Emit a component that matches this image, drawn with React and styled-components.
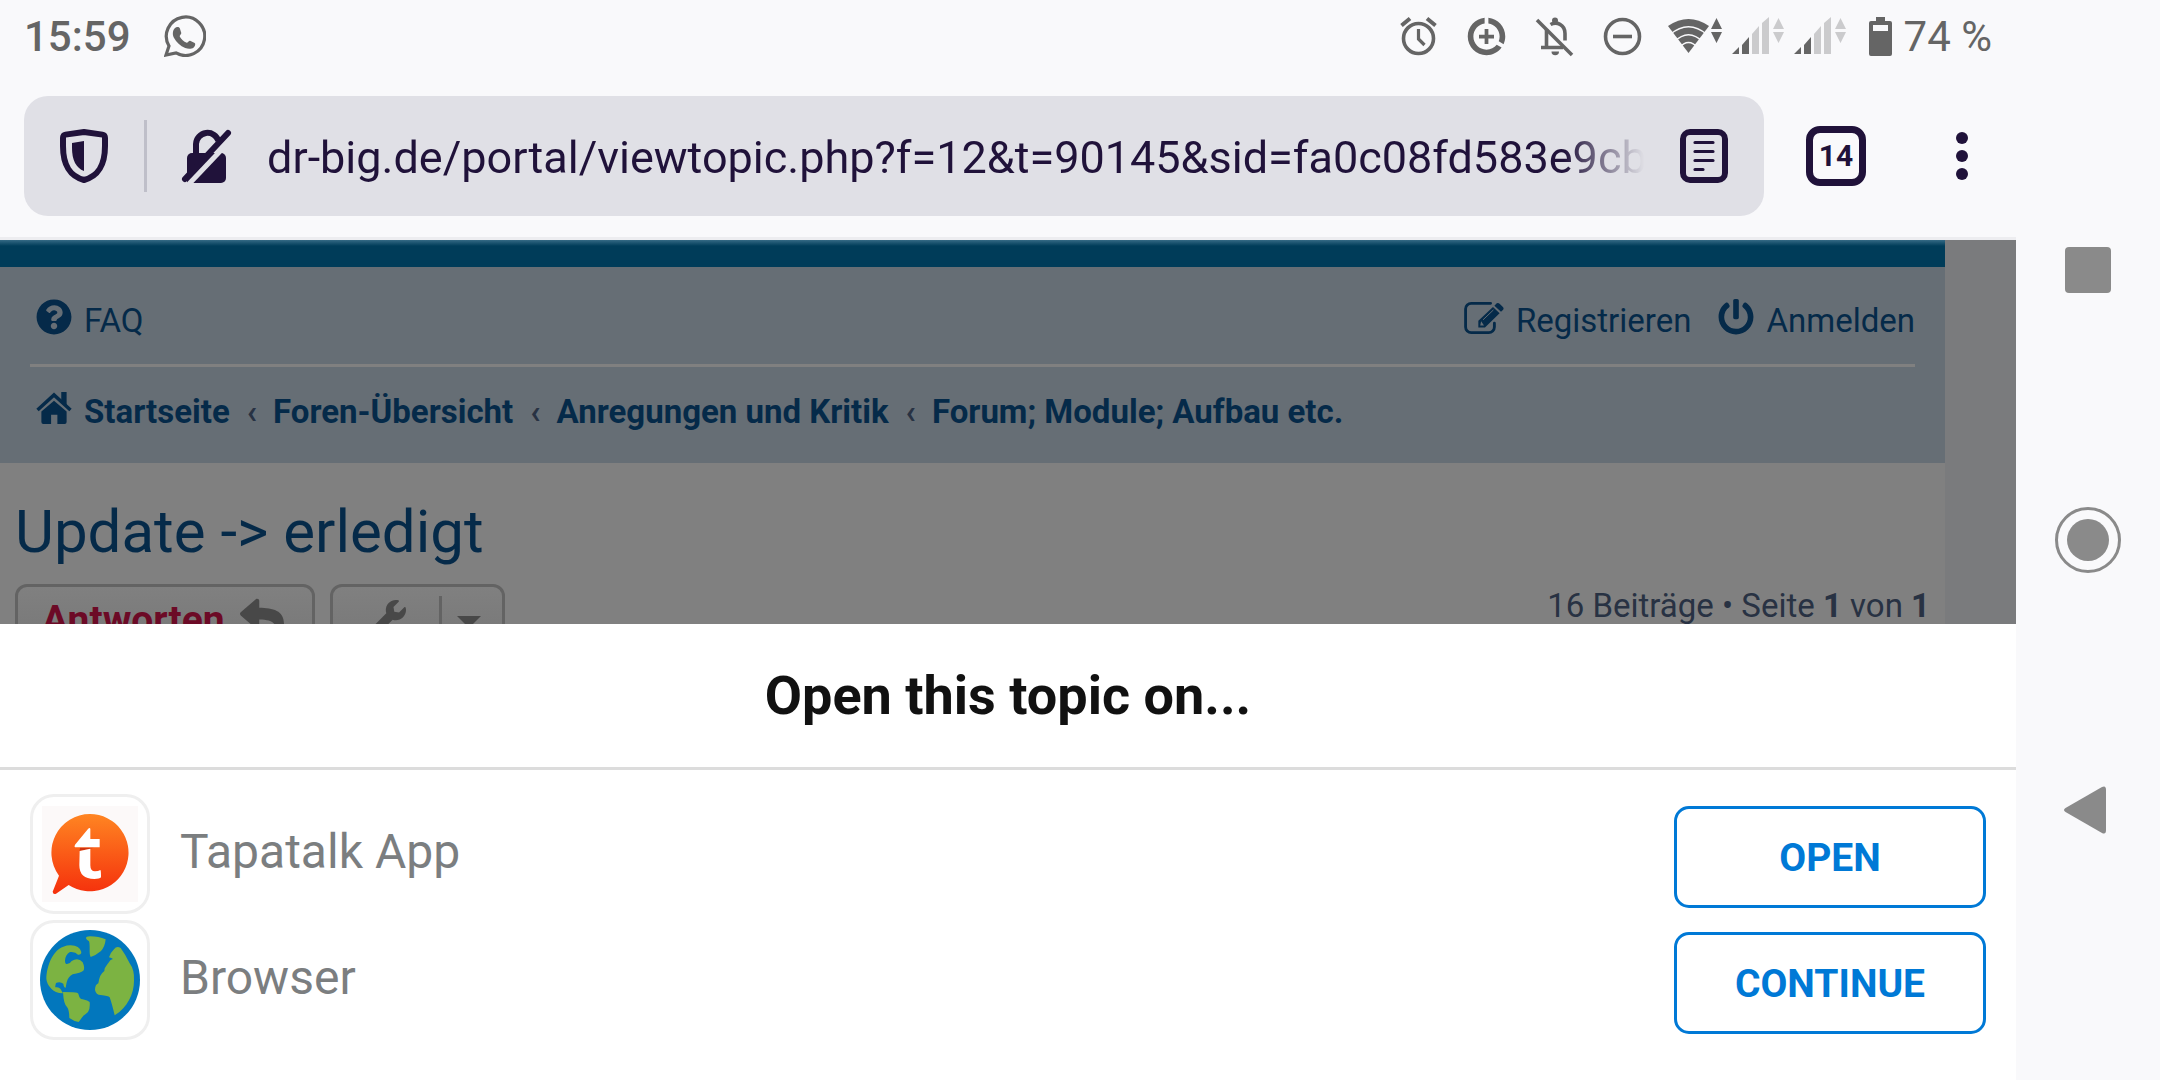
import React from 'react';
import styled, { createGlobalStyle } from 'styled-components';
import { FaQuestionCircle, FaPowerOff, FaReply, FaWrench } from 'react-icons/fa';


const GlobalStyle = createGlobalStyle`
    * {
        box-sizing: border-box;
    }
    body {
        margin: 0;
        background: #f9f9fb;
        font-family: Roboto, "Noto Sans", sans-serif;
    }
    button, input {
        font-family: inherit;
    }
`;

const Screen = styled.div`
    display: flex;
    height: 100vh;
    overflow: hidden;
`;

const Browser = styled.div`
    flex: 1;
    min-width: 0;
    display: flex;
    flex-direction: column;
`;

// ---- status bar ----

const StatusBar = styled.header`
    display: flex;
    align-items: center;
    justify-content: space-between;
    height: 72px;
    padding: 0 24px;
    color: #656565;
    font-size: 42px;
    line-height: 48px;
`;

const StatusGroup = styled.div`
    display: flex;
    align-items: center;
    gap: ${props => props.$gap}px;
`;

const StatusText = styled.span`
    padding-top: 2px;
    font-weight: ${props => props.$weight || 400};
`;

// ---- toolbar ----

const Toolbar = styled.div`
    display: flex;
    align-items: center;
    padding: 24px 36px 21px 24px;
    border-bottom: 3px solid #ededf0;
    color: #20123a;
`;

const AddressBar = styled.div`
    flex: 1;
    min-width: 0;
    display: flex;
    align-items: center;
    gap: 36px;
    height: 120px;
    padding: 0 36px;
    border-radius: 24px;
    background: #e0e0e6;
`;

const AddressDivider = styled.span`
    width: 3px;
    height: 72px;
    background: #bfbfc9;
`;

const AddressInput = styled.input`
    flex: 1;
    min-width: 0;
    padding: 3px 0 0;
    border: 0;
    outline: 0;
    background: transparent;
    color: #20123a;
    font-size: 45px;
    line-height: 60px;
    mask-image: linear-gradient(to left, transparent, #000 80px);
`;

const IconButton = styled.button`
    display: flex;
    padding: 0;
    border: 0;
    background: transparent;
    color: inherit;

    svg {
        overflow: visible;
    }
`;

const TabCounter = styled.button`
    width: 60px;
    height: 60px;
    margin-left: 42px;
    padding: 0;
    border: 7px solid #20123a;
    border-radius: 14px;
    background: transparent;
    color: #20123a;
    font-size: 30px;
    font-weight: 700;
    line-height: 46px;
    text-align: center;
`;

const MenuButton = styled(IconButton)`
    margin-left: 78px;
    padding: 0 12px;
`;

// ---- forum page ----

const Page = styled.main`
    flex: 1;
    min-height: 0;
    overflow: hidden;
    padding-right: 71px;
    background: #7a7b7d;
`;

const Forum = styled.div`
    height: 100%;
    background: #808080;
    color: #283243;
    font-size: 33px;
`;

const HeaderStrip = styled.div`
    height: 27px;
    background: linear-gradient(#356a85, #003c59 6px);
`;

const Navbar = styled.nav`
    padding: 0 30px;
    background: #666e75;
`;

const NavRow = styled.div`
    display: flex;
    align-items: center;
    justify-content: space-between;
    height: 100px;
    padding-top: 10px;
    border-bottom: 3px solid #808080;
`;

const NavLinks = styled.div`
    display: flex;
    gap: 27px;
    padding-left: 6px;
`;

const NavLink = styled.a`
    display: flex;
    align-items: center;
    gap: 12px;
    color: #052a49;
    line-height: 42px;
    text-decoration: none;

    svg {
        flex: none;
        margin-bottom: 8px;
    }
`;

const Breadcrumbs = styled.ol`
    display: flex;
    align-items: center;
    height: 96px;
    margin: 0;
    padding: 0 6px 6px;
    list-style: none;
    font-weight: 700;
`;

const Crumb = styled.li`
    display: flex;

    & + &::before {
        content: '‹';
        padding: 0 16px 0 17px;
        line-height: 42px;
    }
`;

const TopicTitle = styled.h2`
    margin: 0;
    padding: 34px 15px 17px;
    color: #052a49;
    font-size: 60px;
    font-weight: 400;
    line-height: 70px;
`;

const ActionBar = styled.div`
    display: flex;
    align-items: flex-start;
    gap: 15px;
    padding: 0 15px;
`;

const ForumButton = styled.button`
    display: flex;
    align-items: center;
    gap: 15px;
    height: 72px;
    padding: ${props => props.$padding};
    border: 3px solid #636363;
    border-radius: 12px;
    background: linear-gradient(#808080, #767676);
    color: #484848;
    font-size: 39px;
    font-weight: 700;

    svg {
        margin-bottom: 4px;
    }
`;

const ReplyText = styled.span`
    color: #6c0a26;
`;

const ToolsDivider = styled.span`
    width: 3px;
    height: 48px;
    margin-left: 18px;
    background: #636363;
`;

const Pagination = styled.p`
    margin: 0 0 0 auto;
    padding-top: 2px;
    line-height: 39px;
`;

// ---- bottom sheet ----

const Sheet = styled.section`
    padding-bottom: 40px;
    background: #fff;
`;

const SheetTitle = styled.h1`
    margin: 0 0 24px;
    padding: 36px 0 35px;
    border-bottom: 3px solid #dcdcdc;
    color: #111;
    font-size: 54px;
    font-weight: 700;
    line-height: 72px;
    text-align: center;
`;

const SheetList = styled.div`
    display: flex;
    flex-direction: column;
    gap: 6px;
    padding: 0 30px;
`;

const SheetRow = styled.div`
    display: flex;
    align-items: center;
    gap: 30px;
`;

const AppIcon = styled.div`
    display: flex;
    align-items: center;
    justify-content: center;
    width: 120px;
    height: 120px;
    border: 3px solid #efefef;
    border-radius: 24px;
`;

const AppName = styled.span`
    flex: 1;
    padding-bottom: 4px;
    color: #7b7e80;
    font-size: 48px;
    line-height: 60px;
`;

const SheetButton = styled.button`
    width: 312px;
    height: 102px;
    margin-top: 6px;
    padding: 2px 0 0;
    border: 3px solid #0079d6;
    border-radius: 15px;
    background: #fff;
    color: #0079d6;
    font-size: 39px;
    font-weight: 700;
`;

// ---- android navigation ----

const SystemNav = styled.aside`
    display: grid;
    grid-template-rows: repeat(3, 1fr);
    place-items: center;
    width: 144px;
    padding: 12.5vh 0;
    color: #8a8a8a;
`;

// ---- icons ----

const WhatsappIcon = () => (
    <svg width="42" height="42" viewBox="0 0 42 42" fill="none">
        <path d="M5 31A19.2 19.2 0 1 1 12 37.9L2 40Z" stroke="currentColor" strokeWidth="3.2" />
        <path fill="currentColor" d="M11 13c1.5-1.5 4.2-1.2 4.800.3l1.500 4.600c.3 1-2 2.800-1.600 3.500 1.600 3 4 5 7 6.300.8.3 2.300-2.200 3.400-1.900l4.600 2.200c1 .6.6 3.200-1 4.400-2.500 1.800-5.500 1.700-8.500.6-5-2-8.800-5.700-11.300-10.200-1.600-3-1.400-7.400 1.100-9.800z" />
    </svg>
);

const AlarmIcon = () => (
    <svg width="45" height="45" viewBox="0 0 45 45" fill="none" stroke="currentColor">
        <circle cx="22.5" cy="24.5" r="15" strokeWidth="3.6" />
        <path d="M22.5 15v10l6 6" strokeWidth="3.2" />
        <path d="M5.5 11.5l8.5-7M39.5 11.5l-8.5-7" strokeWidth="4" />
    </svg>
);

const DataSaverIcon = () => (
    <svg width="45" height="45" viewBox="0 0 24 24" fill="currentColor">
        <path d="M11 8v3H8v2h3v3h2v-3h3v-2h-3V8h-2zm2-5.95v3.03c3.39.49 6 3.39 6 6.92 0 .9-.18 1.75-.48 2.54l2.6 1.53c.56-1.24.88-2.62.88-4.07 0-5.18-3.95-9.45-9-9.95zM12 19c-3.87 0-7-3.13-7-7 0-3.53 2.61-6.43 6-6.92V2.05c-5.06.49-9 4.76-9 9.95 0 5.52 4.47 10 9.99 10 3.31 0 6.24-1.61 8.06-4.09l-2.6-1.53C16.17 17.98 14.21 19 12 19z" />
    </svg>
);

const BellOffIcon = () => (
    <svg width="45" height="45" viewBox="0 0 45 45" fill="none" stroke="currentColor">
        <path d="M5 6l35 35" strokeWidth="3.6" />
        <path d="M14.5 15v18M9 33.5h22" strokeWidth="3.6" />
        <path d="M18.5 10.5c6-3.5 14.5 0 14.5 9v7" strokeWidth="3.6" />
        <circle cx="23" cy="6.5" r="3" fill="currentColor" stroke="none" />
        <path d="M19.5 37.5h7.5a3.7 3.7 0 0 1-7.5 0z" fill="currentColor" stroke="none" />
    </svg>
);

const DoNotDisturbIcon = () => (
    <svg width="45" height="45" viewBox="0 0 45 45" fill="none" stroke="currentColor" strokeWidth="3.6">
        <circle cx="22.5" cy="22.5" r="17" />
        <path d="M13 22.5h19" />
    </svg>
);

const WifiIcon = () => (
    <svg width="54" height="38" viewBox="0 0 54 38">
        <path d="M0 9Q20.5-5 41 9L20.5 36z" fill="currentColor" />
        <g fill="none" stroke="#f9f9fb" strokeWidth="1.5">
            <path d="M2 17.5Q20.5 2 39 17.5" />
            <path d="M6 25Q20.5 10.5 35 25" />
            <path d="M11 31Q20.5 20 30 31" />
        </g>
        <path d="M43 12l5.5-11L54 12zM43 15h11l-5.5 11z" fill="currentColor" />
    </svg>
);

const SignalIcon = () => (
    <svg width="52" height="38" viewBox="0 0 52 38" fill="#cbcbcd">
        <path d="M0 37l7-7v7zM10 37V28l7-8v17z" fill="#656565" />
        <path d="M20 37V17l7-8v28zM30 37V6l7-6v37z" />
        <path d="M41 12l5.5-11L52 12zM41 15h11l-5.5 11z" />
    </svg>
);

const BatteryIcon = () => (
    <svg width="23" height="39" viewBox="0 0 23 39" fill="currentColor">
        <path fillRule="evenodd" d="M7 0h9v4h5a2 2 0 0 1 2 2v31a2 2 0 0 1-2 2H2a2 2 0 0 1-2-2V6a2 2 0 0 1 2-2h5zM4 8v6h15V8z" />
    </svg>
);

const ShieldIcon = () => (
    <svg width="48" height="54" viewBox="0 0 48 54" fill="none">
        <path d="M24 3L42.5 5.6Q45 6 45 9V17C45 37 38 47 24 51C10 47 3 37 3 17V9Q3 6 5.5 5.6Z" stroke="currentColor" strokeWidth="6" strokeLinejoin="round" />
        <path d="M24 12v30c-8-3-12-11-12-23v-5z" fill="currentColor" />
    </svg>
);

const LockOffIcon = () => (
    <svg width="48" height="54" viewBox="1 0 48 54" fill="none">
        <path d="M14 26V15a11.5 11.5 0 0 1 22.500-3" stroke="currentColor" strokeWidth="6" />
        <path d="M10 24H39a5 5 0 0 1 5 5v20a5 5 0 0 1-5 5H5V29a5 5 0 0 1 5-5z" fill="currentColor" />
        <path d="M6 56L43 17" stroke="#e0e0e6" strokeWidth="5" />
        <path d="M3 50L46 4" stroke="currentColor" strokeWidth="6" strokeLinecap="round" />
    </svg>
);

const ReaderIcon = () => (
    <svg width="48" height="54" viewBox="0 0 48 54" fill="none" stroke="currentColor">
        <rect x="3" y="3" width="42" height="48" rx="7" strokeWidth="6" />
        <path d="M15 13.5h18M15 22.5h18M15 31.5h18M15 40.5h8" strokeWidth="3.2" strokeLinecap="round" />
    </svg>
);

const DotsIcon = () => (
    <svg width="12" height="48" viewBox="0 0 12 48" fill="currentColor">
        <circle cx="6" cy="6" r="6" />
        <circle cx="6" cy="24" r="6" />
        <circle cx="6" cy="42" r="6" />
    </svg>
);

const HomeIcon = () => (
    <svg width="36" height="32" viewBox="0 0 37 33" fill="currentColor">
        <path d="M18.5 9L31.5 20v11a2 2 0 0 1-2 2H22v-9.500h-6.500V33H7.500a2 2 0 0 1-2-2V20z" />
        <path d="M1.5 18.5L18.5 3l17 15.5" fill="none" stroke="currentColor" strokeWidth="3.6" />
        <path d="M26 0h5.500v14L26 9z" />
    </svg>
);

const EditIcon = () => (
    <svg width="40" height="34" viewBox="0 0 42 36" fill="none" stroke="currentColor">
        <path d="M28 3.5H7.500a6 6 0 0 0-6 6v19a6 6 0 0 0 6 6H26a6 6 0 0 0 6-6v-4" strokeWidth="3" strokeLinecap="round" />
        <path fillRule="evenodd" fill="currentColor" stroke="none" d="M30.5 7.500l7 6.500L22 29h-7v-7zM18 22.500l-1 4.500h4z" />
        <path d="M20 21L31 10.5" stroke="#666e75" strokeWidth="1" />
        <path fill="currentColor" stroke="none" d="M32 6l2.500-2.500q1.500-1 3 .5l3.500 3.500q1.500 1.500 0 3L39 12.500z" />
    </svg>
);

const TapatalkIcon = () => (
    <svg width="96" height="96" viewBox="0 0 288 288">
        <defs>
            <linearGradient id="bubble" x1="0" y1="0" x2="0" y2="1">
                <stop offset="0" stopColor="#ff8522" />
                <stop offset="1" stopColor="#f5300c" />
            </linearGradient>
        </defs>
        <rect width="288" height="288" fill="#fcf9f9" />
        <path fill="url(#bubble)" d="M144 24a116 116 0 1 1-64 213L42 263q-9 3-10-6L51 209A116 116 0 0 1 144 24z" />
        <path fill="#cf3412" d="M114 125h42l-43 10z" />
        <path fill="#fff" d="M145 68v31h28v25h-74q-3-2 0-8l39-47q5-6 7-1zM113 135l32-7v50q0 18 14 18 10 0 16-4 2 0 2 22-4 5-20 5-45 0-45-41z" />
    </svg>
);

const GlobeIcon = () => (
    <svg width="100" height="100" viewBox="0 0 300 300">
        <circle cx="150" cy="150" r="150" fill="#0277bd" />
        <g fill="#7cb342">
            <path d="M19 146C20 110 38 48 90 46q28-1 34 20 0 9-10 8-8-10-24-8-14 8-15 26 0 10 6 10 10-2 14-9 20-12 33 4 8 18 2 25-8 6-32 11c-20 12-18 30-21 40q-6 0-7-12-10-8-22-2-4 14-1 13 9-2 14 4l8 14q-25-2-35-14-14-14-15-30z" />
            <path d="M69 186l30 1q16 0 17 7 2 12 12 14 16 4 21 8 2 20-5 30-8 8-14 11-10 14-14 19-14-2-28-12 0-24-7-33-10-8-12-45z" />
            <path d="M138 25q-1-6 12-6 26 0 47 9-2 22-14 35-14 12-31 18-4-8-3-25 0-18-2-22-8-4-9-9z" />
            <path d="M207 82q6-16 15-24 8-12 20-4 16 22 27 46 15 20 13 52c0 40-20 80-58 104q-8-34-15-54-4-5-27-7-14 0-17-15 0-16 10-20 4-28 18-37 0-8 3-11 8-12 15-21 4-3 8-4-4-3-12-5z" />
        </g>
    </svg>
);

// the triangle sits a little under the middle of the button
const CaretIcon = () => (
    <svg width="24" height="20" viewBox="0 0 24 20" fill="currentColor">
        <path d="M0 8h24L12 20z" />
    </svg>
);

const options = [
    { name: 'Tapatalk App', action: 'OPEN', icon: <TapatalkIcon /> },
    { name: 'Browser', action: 'CONTINUE', icon: <GlobeIcon /> },
];

const crumbs = ['Startseite', 'Foren-Übersicht', 'Anregungen und Kritik', 'Forum; Module; Aufbau etc.'];

const App = () =>
{
    return (
        <Screen>
            <GlobalStyle />
            <Browser>
                <StatusBar>
                    <StatusGroup $gap={33}>
                        <StatusText $weight={500}>15:59</StatusText>
                        <WhatsappIcon />
                    </StatusGroup>
                    <StatusGroup $gap={23}>
                        <StatusGroup $gap={23}>
                            <AlarmIcon />
                            <DataSaverIcon />
                            <BellOffIcon />
                            <DoNotDisturbIcon />
                        </StatusGroup>
                        <StatusGroup $gap={10}>
                            <WifiIcon />
                            <SignalIcon />
                            <SignalIcon />
                        </StatusGroup>
                        <StatusGroup $gap={12}>
                            <BatteryIcon />
                            <StatusText>74 %</StatusText>
                        </StatusGroup>
                    </StatusGroup>
                </StatusBar>

                <Toolbar>
                    <AddressBar>
                        <IconButton aria-label="Tracking protection"><ShieldIcon /></IconButton>
                        <AddressDivider />
                        <IconButton aria-label="Connection is not secure"><LockOffIcon /></IconButton>
                        <AddressInput
                            aria-label="Address"
                            defaultValue="dr-big.de/portal/viewtopic.php?f=12&t=90145&sid=fa0c08fd583e9cb"
                        />
                        <IconButton aria-label="Reader view"><ReaderIcon /></IconButton>
                    </AddressBar>
                    <TabCounter aria-label="14 open tabs">14</TabCounter>
                    <MenuButton aria-label="Menu"><DotsIcon /></MenuButton>
                </Toolbar>

                <Page>
                    <Forum>
                        <HeaderStrip />
                        <Navbar>
                            <NavRow>
                                <NavLinks>
                                    <NavLink href="#faq"><FaQuestionCircle size={36} />FAQ</NavLink>
                                </NavLinks>
                                <NavLinks>
                                    <NavLink href="#register"><EditIcon />Registrieren</NavLink>
                                    <NavLink href="#login"><FaPowerOff size={36} />Anmelden</NavLink>
                                </NavLinks>
                            </NavRow>
                            <Breadcrumbs>
                                {crumbs.map((crumb, i) => (
                                    <Crumb key={crumb}>
                                        <NavLink href={'#crumb-' + i}>
                                            {i === 0 && <HomeIcon />}
                                            {crumb}
                                        </NavLink>
                                    </Crumb>
                                ))}
                            </Breadcrumbs>
                        </Navbar>
                        <TopicTitle>Update -&gt; erledigt</TopicTitle>
                        <ActionBar>
                            <ForumButton $padding="0 28px 0 24px">
                                <ReplyText>Antworten</ReplyText>
                                <FaReply size={44} />
                            </ForumButton>
                            <ForumButton $padding="0 21px 0 37px" aria-label="Topic tools">
                                <FaWrench size={36} />
                                <ToolsDivider />
                                <CaretIcon />
                            </ForumButton>
                            <Pagination>
                                16 Beiträge • Seite <b>1</b> von <b>1</b>
                            </Pagination>
                        </ActionBar>
                    </Forum>
                </Page>

                <Sheet>
                    <SheetTitle>Open this topic on...</SheetTitle>
                    <SheetList>
                        {options.map(option => (
                            <SheetRow key={option.name}>
                                <AppIcon>{option.icon}</AppIcon>
                                <AppName>{option.name}</AppName>
                                <SheetButton>{option.action}</SheetButton>
                            </SheetRow>
                        ))}
                    </SheetList>
                </Sheet>
            </Browser>

            <SystemNav>
                <IconButton aria-label="Recent apps">
                    <svg width="46" height="46" viewBox="0 0 46 46" fill="currentColor">
                        <rect width="46" height="46" rx="4" />
                    </svg>
                </IconButton>
                <IconButton aria-label="Home">
                    <svg width="66" height="66" viewBox="0 0 66 66">
                        <circle cx="33" cy="33" r="31.5" fill="none" stroke="currentColor" strokeWidth="3" />
                        <circle cx="33" cy="33" r="21" fill="currentColor" />
                    </svg>
                </IconButton>
                <IconButton aria-label="Back">
                    <svg width="48" height="48" viewBox="0 0 48 48" fill="currentColor">
                        <path d="M1.5 22L38 1q4-2 4 3v40q0 5-4 3L1.5 26q-3-2 0-4z" />
                    </svg>
                </IconButton>
            </SystemNav>
        </Screen>
    );
}

export default App;
